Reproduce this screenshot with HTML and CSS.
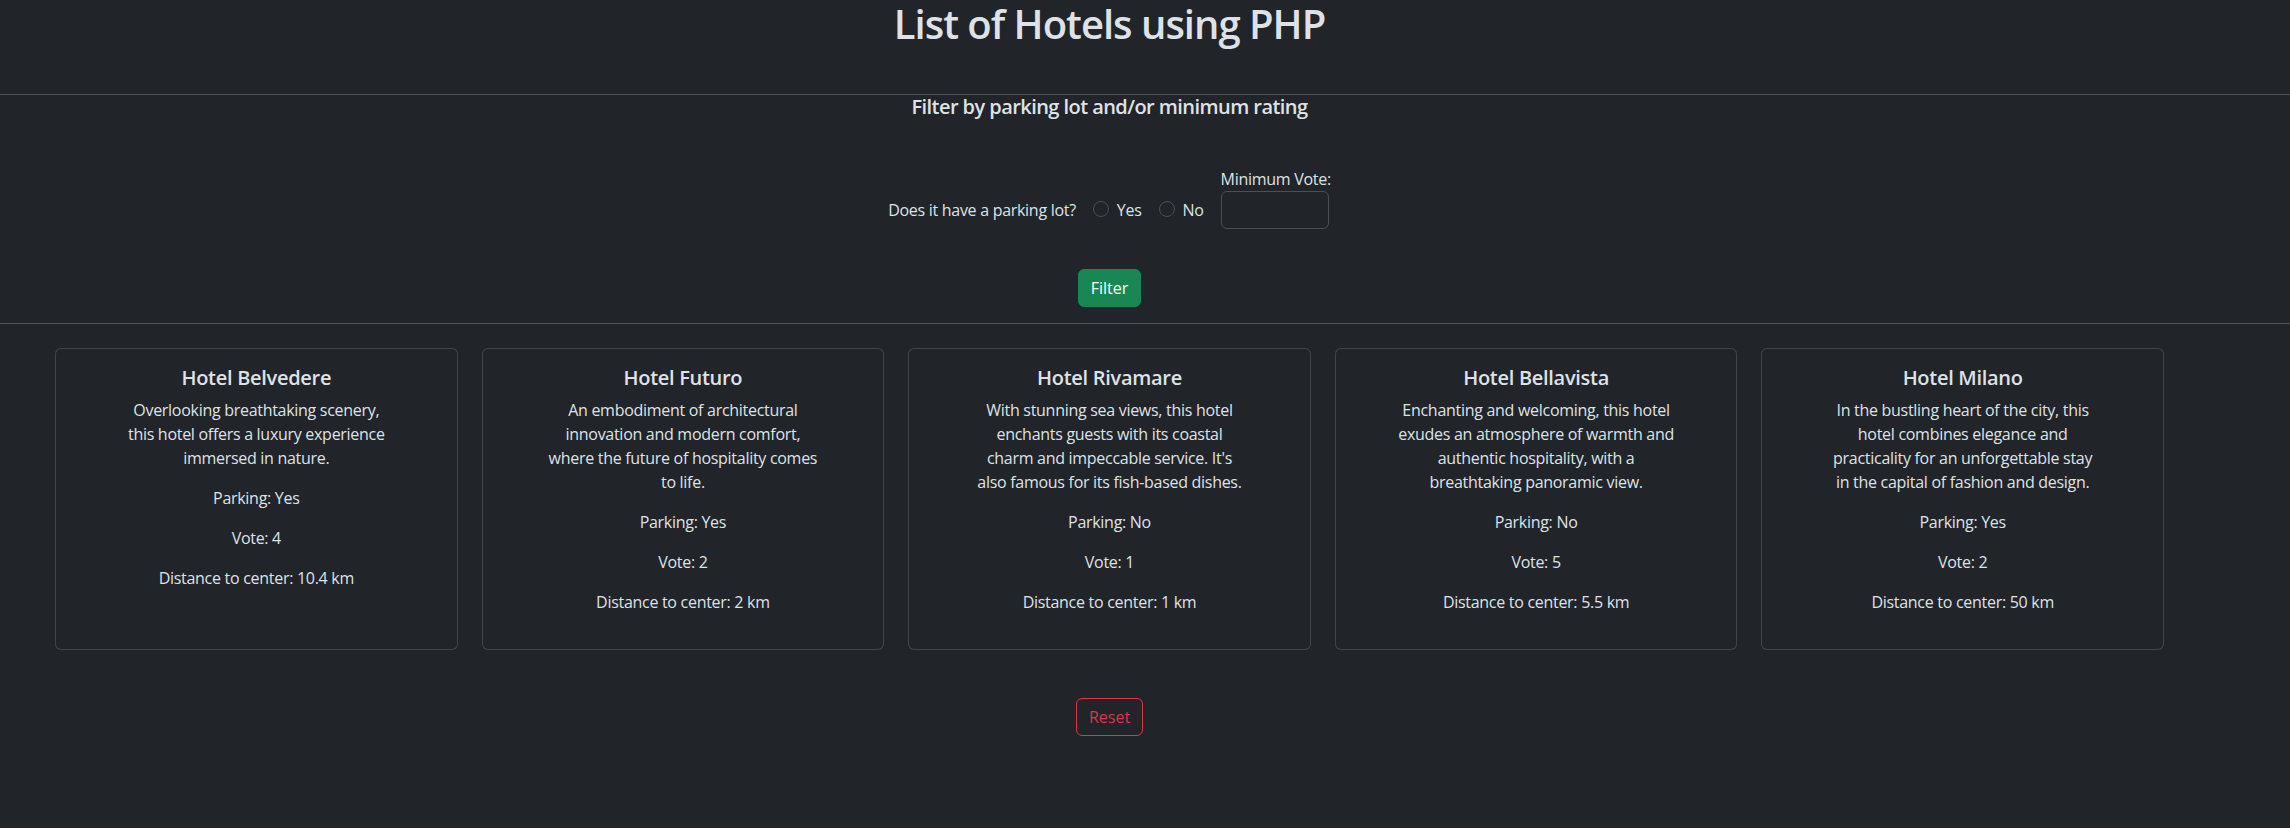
FILE: index.html
```html
<!DOCTYPE html>
<html lang="en">
<head>
<meta charset="utf-8">
<title>List of Hotels using PHP</title>
<link rel="stylesheet" href="styles.css">
</head>
<body>
<header class="wrap top">
  <h1 class="page-title">List of Hotels using PHP</h1>
</header>
<hr class="rule">
<section class="wrap filter">
  <h5 class="filter-title">Filter by parking lot and/or minimum rating</h5>
  <form class="filter-form">
    <div class="filter-row"><span class="parking-q">Does it have a parking lot?</span><label class="check"><input type="radio" name="parking" class="radio"><span class="check-label">Yes</span></label><label class="check"><input type="radio" name="parking" class="radio"><span class="check-label">No</span></label><div class="vote-group"><label class="vote-label" for="vote">Minimum Vote:</label><input id="vote" type="number" class="vote-input"></div></div>
    <div class="btn-row"><button type="button" class="btn btn-filter">Filter</button></div>
  </form>
</section>
<hr class="rule">
<main class="wrap hotels">
  <div class="card">
    <h5 class="card-title">Hotel Belvedere</h5>
    <p class="card-desc">Overlooking breathtaking scenery,<br>this hotel offers a luxury experience<br>immersed in nature.</p>
    <p class="card-info">Parking: Yes</p>
    <p class="card-info">Vote: 4</p>
    <p class="card-info">Distance to center: 10.4 km</p>
  </div>
  <div class="card">
    <h5 class="card-title">Hotel Futuro</h5>
    <p class="card-desc">An embodiment of architectural<br>innovation and modern comfort,<br>where the future of hospitality comes<br>to life.</p>
    <p class="card-info">Parking: Yes</p>
    <p class="card-info">Vote: 2</p>
    <p class="card-info">Distance to center: 2 km</p>
  </div>
  <div class="card">
    <h5 class="card-title">Hotel Rivamare</h5>
    <p class="card-desc">With stunning sea views, this hotel<br>enchants guests with its coastal<br>charm and impeccable service. It's<br>also famous for its fish-based dishes.</p>
    <p class="card-info">Parking: No</p>
    <p class="card-info">Vote: 1</p>
    <p class="card-info">Distance to center: 1 km</p>
  </div>
  <div class="card">
    <h5 class="card-title">Hotel Bellavista</h5>
    <p class="card-desc">Enchanting and welcoming, this hotel<br>exudes an atmosphere of warmth and<br>authentic hospitality, with a<br>breathtaking panoramic view.</p>
    <p class="card-info">Parking: No</p>
    <p class="card-info">Vote: 5</p>
    <p class="card-info">Distance to center: 5.5 km</p>
  </div>
  <div class="card">
    <h5 class="card-title">Hotel Milano</h5>
    <p class="card-desc">In the bustling heart of the city, this<br>hotel combines elegance and<br>practicality for an unforgettable stay<br>in the capital of fashion and design.</p>
    <p class="card-info">Parking: Yes</p>
    <p class="card-info">Vote: 2</p>
    <p class="card-info">Distance to center: 50 km</p>
  </div>
</main>
<div class="wrap reset-row">
  <button type="button" class="btn btn-reset">Reset</button>
</div>
</body>
</html>
```

FILE: styles.css
```css
* { box-sizing: border-box; }

html, body {
  background: #212529;
}

body {
  margin: 0;
  color: #dee2e6;
  font-family: "Open Sans", "Noto Sans", sans-serif;
  font-size: 16px;
  line-height: 24px;
  letter-spacing: -0.018em;
}

.wrap {
  width: 2109px;
  margin-left: 55px;
  text-align: center;
}

.top {
  padding-bottom: 46px;
}

.page-title {
  margin: 0;
  font-size: 40px;
  line-height: 48px;
  font-weight: 600;
  letter-spacing: -0.025em;
}

.rule {
  margin: 0;
  border: 0;
  border-top: 1px solid #505458;
  height: 0;
}

.filter {
  padding-bottom: 16px;
}

.filter-title {
  margin: 0;
  font-size: 20px;
  line-height: 24px;
  font-weight: 600;
  letter-spacing: -0.028em;
}

.filter-form {
  margin: 0;
}

.filter-row {
  margin-top: 48px;
  text-align: center;
}

.parking-q {
  display: inline-block;
  margin-right: 17px;
}

.check {
  display: inline-block;
  margin-right: 17px;
}

.radio {
  appearance: none;
  -webkit-appearance: none;
  display: inline-block;
  width: 16px;
  height: 16px;
  margin: 0 8px 0 0;
  border: 1px solid #495057;
  border-radius: 50%;
  background: #212529;
  vertical-align: -1px;
}

.check-label {
  display: inline-block;
}

.vote-group {
  display: inline-block;
  text-align: left;
  vertical-align: baseline;
}

.vote-label {
  display: block;
}

.vote-input {
  display: inline-block;
  width: 108px;
  height: 38px;
  margin: 0;
  padding: 6px 12px;
  font: inherit;
  color: #dee2e6;
  background: #212529;
  border: 1px solid #495057;
  border-radius: 6px;
  outline: none;
  -moz-appearance: textfield;
}

.vote-input::-webkit-outer-spin-button,
.vote-input::-webkit-inner-spin-button {
  -webkit-appearance: none;
  margin: 0;
}

.btn-row {
  margin-top: 40px;
}

.btn {
  display: inline-block;
  height: 38px;
  padding: 6px 12px;
  font: inherit;
  line-height: 24px;
  border-radius: 6px;
  border: 1px solid transparent;
  cursor: pointer;
}

.btn-filter {
  background: #198754;
  border-color: #198754;
  color: #ffffff;
}

.hotels {
  display: flex;
  gap: 24px;
  margin-top: 24px;
  align-items: stretch;
}

.card {
  flex: 1 1 0;
  border: 1px solid rgba(255, 255, 255, 0.15);
  border-radius: 6px;
  padding: 17px 16px 19px;
  background: #212529;
}

.card-title {
  margin: 0 0 8px;
  font-size: 20px;
  line-height: 24px;
  font-weight: 600;
}

.card-desc {
  margin: 0 0 16px;
  white-space: nowrap;
}

.card-info {
  margin: 0 0 16px;
}

.reset-row {
  margin-top: 48px;
}

.btn-reset {
  background: transparent;
  border-color: #dc3545;
  color: #dc3545;
}
```
